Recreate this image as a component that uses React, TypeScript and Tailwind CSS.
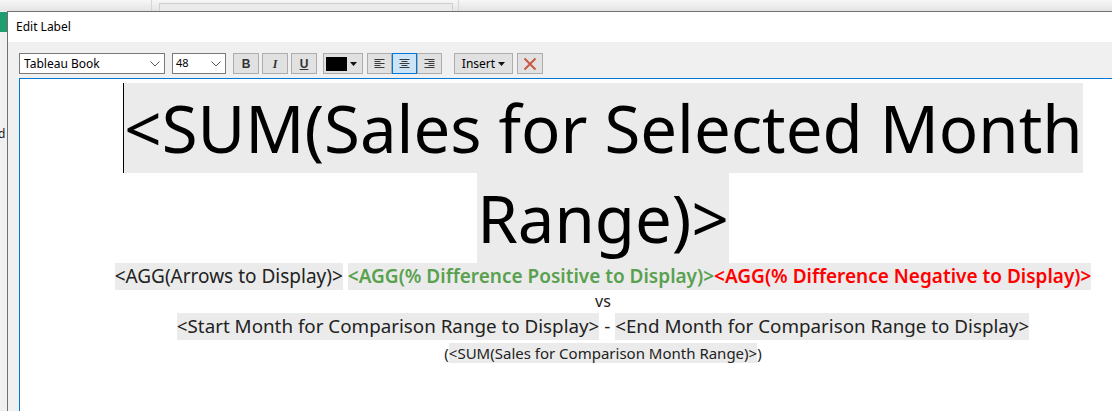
import React from 'react';

const font = { fontFamily: '"Noto Sans", "Open Sans", sans-serif' };

const AlignIcon: React.FC<{ mode: 'left' | 'center' | 'right' }> = ({ mode }) => {
  const rows = [
    { y: 1.5, w: 10 },
    { y: 3.5, w: 6 },
    { y: 5.5, w: 10 },
    { y: 7.5, w: 6 },
    { y: 9.5, w: 10 },
  ];
  return (
    <svg width="11" height="11" viewBox="0 0 11 11">
      {rows.map((r, i) => {
        const x = mode === 'left' ? 0.5 : mode === 'right' ? 10.5 - r.w : (11 - r.w) / 2;
        return <line key={i} x1={x} x2={x + r.w} y1={r.y} y2={r.y} stroke="#3a3a3a" strokeWidth="1" />;
      })}
    </svg>
  );
};

const Chevron = () => (
  <svg width="10" height="6" viewBox="0 0 10 6">
    <path d="M0.5 0.5 L5 5 L9.5 0.5" fill="none" stroke="#555" strokeWidth="1" />
  </svg>
);

const Caret = () => (
  <svg width="7" height="4" viewBox="0 0 7 4">
    <path d="M0 0 H7 L3.5 4 Z" fill="#111" />
  </svg>
);

const ToolButton: React.FC<{ className?: string; children: React.ReactNode }> = ({ className = '', children }) => (
  <div className={`h-[21px] flex items-center justify-center bg-[#e1e1e1] border border-[#adadad] ${className}`}>
    {children}
  </div>
);

export default function App() {
  return (
    <div className="w-[1112px] h-[411px] overflow-hidden bg-[#f0f0f0] flex flex-col" style={font}>
      {/* desktop behind the dialog */}
      <div className="h-[11px] shrink-0 flex bg-gradient-to-b from-[#f7f7f7] to-[#e4e4e4]">
        <div className="w-[152px] border-r border-[#d6d6d6]" />
        <div className="w-[7px]" />
        <div className="w-[294px] mt-[3px] border border-b-0 border-[#cfcfcf] bg-[#ebebeb]" />
        <div className="w-[6px] border-r border-[#d6d6d6]" />
      </div>

      <div className="flex flex-1 min-h-0">
        <div className="w-[7px] shrink-0 flex flex-col bg-[#f0f0f0] overflow-hidden">
          <div className="h-[1px]" />
          <div className="h-[20px] bg-[#1e9e6e]" />
          <div className="h-[95px]" />
          <div className="text-[12px] leading-[14px] text-[#222] -ml-[2px]">d</div>
        </div>

        {/* dialog */}
        <div className="w-[1200px] shrink-0 border-l border-t border-[#707070] flex flex-col">
          <div className="h-[30px] bg-white flex items-center pl-[8px] text-[12px] text-black">Edit Label</div>

          <div className="h-[36px] bg-[#f0f0f0] flex items-start pt-[11px] pl-[11px] text-[12px] text-black">
            <div className="w-[146px] h-[21px] bg-white border border-[#7a7a7a] flex items-center justify-between pl-[4px] pr-[4px]">
              <span>Tableau Book</span>
              <Chevron />
            </div>
            <div className="w-[54px] h-[21px] ml-[7px] bg-white border border-[#7a7a7a] flex items-center justify-between pl-[3px] pr-[4px]">
              <span className="text-[11px]">48</span>
              <Chevron />
            </div>
            <ToolButton className="w-[26px] ml-[7px]">
              <span className="font-bold text-[12px] text-[#333]" style={{ fontFamily: '"Liberation Sans", sans-serif' }}>B</span>
            </ToolButton>
            <ToolButton className="w-[26px] ml-[3px]">
              <span className="italic font-bold text-[12px] text-[#333]" style={{ fontFamily: '"Liberation Serif", serif' }}>I</span>
            </ToolButton>
            <ToolButton className="w-[26px] ml-[3px]">
              <span className="underline font-bold text-[12px] text-[#333]" style={{ fontFamily: '"Liberation Sans", sans-serif' }}>U</span>
            </ToolButton>
            <ToolButton className="w-[40px] ml-[6px] justify-start pl-[2px] gap-[3px]">
              <div className="w-[21px] h-[14px] bg-black" />
              <Caret />
            </ToolButton>
            <div className="ml-[4px] flex">
              <ToolButton className="w-[25px]">
                <AlignIcon mode="left" />
              </ToolButton>
              <div className="w-[25px] h-[21px] flex items-center justify-center bg-[#cce4f7] border border-[#0078d7]">
                <AlignIcon mode="center" />
              </div>
              <ToolButton className="w-[25px]">
                <AlignIcon mode="right" />
              </ToolButton>
            </div>
            <ToolButton className="w-[59px] ml-[12px] gap-[3px]">
              <span className="text-[12px]">Insert</span>
              <Caret />
            </ToolButton>
            <ToolButton className="w-[26px] ml-[4px]">
              <svg width="14" height="14" viewBox="0 0 14 14">
                <path d="M1.5 1.5 L12.5 12.5 M12.5 1.5 L1.5 12.5" stroke="#c8553d" strokeWidth="1.8" />
              </svg>
            </ToolButton>
          </div>

          {/* editor */}
          <div className="flex-1 bg-[#f0f0f0] pl-[11px]">
            <div className="w-[1167px] h-full bg-white border-l border-t border-[#0078d7] pt-[4px] text-center">
              <div className="h-[90px]">
                <span className="inline-block h-[90px] leading-[90px] text-[65.3px] text-black bg-[#ebebeb] border-l border-black whitespace-nowrap">
                  &lt;SUM(Sales for Selected Month
                </span>
              </div>
              <div className="h-[90px]">
                <span className="inline-block h-[90px] leading-[90px] text-[65.3px] text-black bg-[#ebebeb] whitespace-nowrap">
                  Range)&gt;
                </span>
              </div>
              <div className="h-[27px] text-[19px] leading-[27px] whitespace-nowrap">
                <span className="inline-block h-[27px] bg-[#ebebeb] text-[#222]">&lt;AGG(Arrows to Display)&gt;</span>{' '}
                <span className="inline-block h-[27px] bg-[#ebebeb] text-[#59a14f] font-semibold">&lt;AGG(% Difference Positive to Display)&gt;</span>
                <span className="inline-block h-[27px] bg-[#ebebeb] text-[#ff0000] font-semibold">&lt;AGG(% Difference Negative to Display)&gt;</span>
              </div>
              <div className="h-[23px] text-[16px] leading-[22px] text-[#222]">vs</div>
              <div className="h-[30px] text-[18.8px] leading-[27px] whitespace-nowrap text-[#222]">
                <span className="inline-block h-[27px] bg-[#ebebeb]">&lt;Start Month for Comparison Range to Display&gt;</span>
                {' - '}
                <span className="inline-block h-[27px] bg-[#ebebeb]">&lt;End Month for Comparison Range to Display&gt;</span>
              </div>
              <div className="h-[20px] text-[15px] leading-[20px] whitespace-nowrap text-[#222]">
                (<span className="inline-block h-[20px] bg-[#ebebeb]">&lt;SUM(Sales for Comparison Month Range)&gt;</span>)
              </div>
            </div>
          </div>
        </div>
      </div>
    </div>
  );
}
